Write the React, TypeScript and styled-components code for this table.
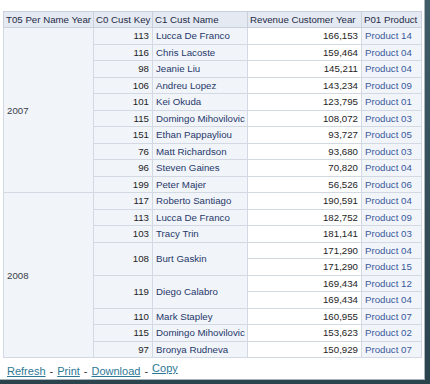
import React from "react";
import styled, { createGlobalStyle } from "styled-components";

const GlobalStyle = createGlobalStyle`
  html, body {
    margin: 0;
    padding: 0;
    background: #2e4852;
  }
  body {
    font-family: "Liberation Sans", Arial, sans-serif;
  }
`;

const Frame = styled.div`
  width: 430px;
  height: 384px;
  display: grid;
  grid-template-columns: 425px 5px;
  grid-template-rows: 380px 4px;
  background: linear-gradient(180deg, #3f5c68 0%, #2a434d 100%);
`;

const Sheet = styled.div`
  background: #ffffff;
  padding: 11px 0 0 3px;
  box-sizing: border-box;
  border-right: 1px solid #a9b4b8;
  border-bottom: 1px solid #a9b4b8;
`;

const Grid = styled.table`
  border-collapse: collapse;
  border: 1px solid #c9d0dc;
  table-layout: fixed;
  width: 418px;
  font-size: 9.7px;
`;

const Col = styled.col<{ $w: number }>`
  width: ${({ $w }) => $w}px;
`;

const Head = styled.th`
  height: 15px;
  padding: 0 2px;
  background: #e5e9f1;
  color: #1d2b48;
  font-weight: normal;
  text-align: left;
  white-space: nowrap;
  overflow: hidden;
  border: 1px solid #c9d0dc;
`;

const Cell = styled.td<{ $kind: "year" | "key" | "name" | "rev" | "prod" }>`
  height: 15.5px;
  padding: 0 3px;
  white-space: nowrap;
  overflow: hidden;
  border: 1px solid #d3d9e3;
  background: ${({ $kind }) => ($kind === "rev" ? "#ffffff" : "#f1f4f9")};
  color: ${({ $kind }) =>
    $kind === "name"
      ? "#26386a"
      : $kind === "prod"
      ? "#3a5a9c"
      : $kind === "year"
      ? "#3a3f4a"
      : "#1e1e1e"};
  text-align: ${({ $kind }) =>
    $kind === "key" || $kind === "rev" ? "right" : "left"};
  vertical-align: middle;
`;

const Footer = styled.div`
  margin-top: 4px;
  padding-left: 4px;
  font-size: 11px;
  color: #333;
  white-space: nowrap;
`;

const Link = styled.a<{ $raised?: boolean }>`
  color: #2d7896;
  text-decoration: underline;
  cursor: pointer;
  vertical-align: ${({ $raised }) => ($raised ? "3px" : "baseline")};
`;

const Sep = styled.span`
  margin: 0 4px;
`;

type Line = { rev: string; prod: string };
type Customer = { key: number; name: string; lines: Line[] };
type Year = { year: string; customers: Customer[] };

const DATA: Year[] = [
  {
    year: "2007",
    customers: [
      { key: 113, name: "Lucca De Franco", lines: [{ rev: "166,153", prod: "Product 14" }] },
      { key: 116, name: "Chris Lacoste", lines: [{ rev: "159,464", prod: "Product 04" }] },
      { key: 98, name: "Jeanie Liu", lines: [{ rev: "145,211", prod: "Product 04" }] },
      { key: 106, name: "Andreu Lopez", lines: [{ rev: "143,234", prod: "Product 09" }] },
      { key: 101, name: "Kei Okuda", lines: [{ rev: "123,795", prod: "Product 01" }] },
      { key: 115, name: "Domingo Mihovilovic", lines: [{ rev: "108,072", prod: "Product 03" }] },
      { key: 151, name: "Ethan Pappayliou", lines: [{ rev: "93,727", prod: "Product 05" }] },
      { key: 76, name: "Matt Richardson", lines: [{ rev: "93,680", prod: "Product 03" }] },
      { key: 96, name: "Steven Gaines", lines: [{ rev: "70,820", prod: "Product 04" }] },
      { key: 199, name: "Peter Majer", lines: [{ rev: "56,526", prod: "Product 06" }] },
    ],
  },
  {
    year: "2008",
    customers: [
      { key: 117, name: "Roberto Santiago", lines: [{ rev: "190,591", prod: "Product 04" }] },
      { key: 113, name: "Lucca De Franco", lines: [{ rev: "182,752", prod: "Product 09" }] },
      { key: 103, name: "Tracy Trin", lines: [{ rev: "181,141", prod: "Product 03" }] },
      {
        key: 108,
        name: "Burt Gaskin",
        lines: [
          { rev: "171,290", prod: "Product 04" },
          { rev: "171,290", prod: "Product 15" },
        ],
      },
      {
        key: 119,
        name: "Diego Calabro",
        lines: [
          { rev: "169,434", prod: "Product 12" },
          { rev: "169,434", prod: "Product 04" },
        ],
      },
      { key: 110, name: "Mark Stapley", lines: [{ rev: "160,955", prod: "Product 07" }] },
      { key: 115, name: "Domingo Mihovilovic", lines: [{ rev: "153,623", prod: "Product 02" }] },
      { key: 97, name: "Bronya Rudneva", lines: [{ rev: "150,929", prod: "Product 07" }] },
    ],
  },
];

const App: React.FC = () => {
  const rows: React.ReactNode[] = [];
  DATA.forEach((y) => {
    const yearSpan = y.customers.reduce((n, c) => n + c.lines.length, 0);
    y.customers.forEach((c, ci) => {
      c.lines.forEach((l, li) => {
        rows.push(
          <tr key={`${y.year}-${ci}-${li}`}>
            {ci === 0 && li === 0 && (
              <Cell $kind="year" rowSpan={yearSpan}>
                {y.year}
              </Cell>
            )}
            {li === 0 && (
              <>
                <Cell $kind="key" rowSpan={c.lines.length}>
                  {c.key}
                </Cell>
                <Cell $kind="name" rowSpan={c.lines.length}>
                  {c.name}
                </Cell>
              </>
            )}
            <Cell $kind="rev">{l.rev}</Cell>
            <Cell $kind="prod">{l.prod}</Cell>
          </tr>
        );
      });
    });
  });

  return (
    <>
      <GlobalStyle />
      <Frame>
        <Sheet>
          <Grid>
            <colgroup>
              <Col $w={90} />
              <Col $w={59} />
              <Col $w={95} />
              <Col $w={114} />
              <Col $w={60} />
            </colgroup>
            <thead>
              <tr>
                <Head>T05 Per Name Year</Head>
                <Head>C0 Cust Key</Head>
                <Head>C1 Cust Name</Head>
                <Head>Revenue Customer Year</Head>
                <Head>P01 Product</Head>
              </tr>
            </thead>
            <tbody>{rows}</tbody>
          </Grid>
          <Footer>
            <Link>Refresh</Link>
            <Sep>-</Sep>
            <Link>Print</Link>
            <Sep>-</Sep>
            <Link>Download</Link>
            <Sep>-</Sep>
            <Link $raised>Copy</Link>
          </Footer>
        </Sheet>
      </Frame>
    </>
  );
};

export default App;
